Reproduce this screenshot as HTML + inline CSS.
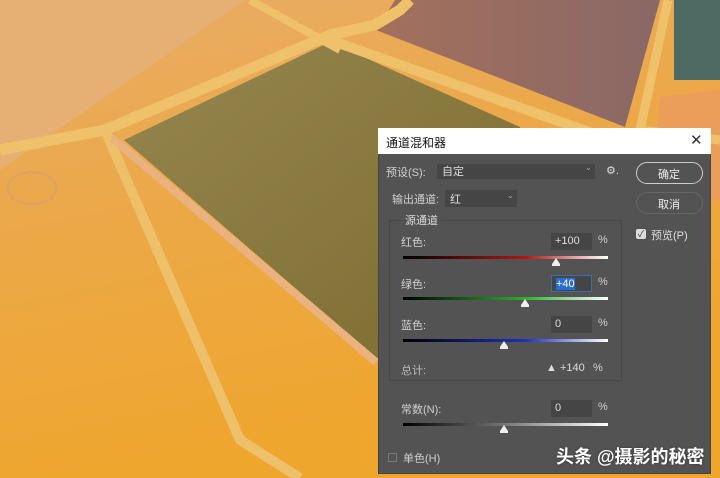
<!DOCTYPE html>
<html><head><meta charset="utf-8"><style>
*{margin:0;padding:0;box-sizing:border-box}
body{width:720px;height:478px;overflow:hidden;position:relative;font-family:"Liberation Sans","Noto Sans CJK SC",sans-serif;background:#eba83e}
.a{position:absolute}
.t{position:absolute;color:#d0d0d0;font-size:11px;white-space:nowrap}
.inp{position:absolute;background:#454545;width:41px;height:17px;color:#ddd;font-size:11px;padding:2px 4px;line-height:13px}
.sl{position:absolute;left:403px;width:205px;height:3px}
.th{position:absolute;width:0;height:0;border-left:4px solid transparent;border-right:4px solid transparent;border-bottom:6px solid #eee}
.th:after{content:"";position:absolute;left:-4px;top:6px;width:8px;height:2px;background:#eee}
</style></head><body>
<svg class="a" style="left:0;top:0" width="720" height="478">
<defs><linearGradient id="bg" x1="0" y1="0" x2="0.3" y2="1"><stop offset="0" stop-color="#e8ac66"/><stop offset="0.5" stop-color="#eca845"/><stop offset="1" stop-color="#efa62c"/></linearGradient>
<linearGradient id="ol" x1="0" y1="0" x2="1" y2="1"><stop offset="0" stop-color="#958650"/><stop offset="1" stop-color="#7c6c2e"/></linearGradient>
<linearGradient id="br" x1="0" y1="0" x2="1" y2="0"><stop offset="0" stop-color="#a3705c"/><stop offset="1" stop-color="#8a6866"/></linearGradient></defs>
<rect width="720" height="478" fill="url(#bg)"/>
<polygon points="0,0 245,0 0,170" fill="#e6b075"/>
<polygon points="395,0 660,0 625,127 376,30" fill="url(#br)"/>
<polygon points="674,0 720,0 720,80 674,80" fill="#4f6a62"/>
<polygon points="660,97 720,90 720,200 650,200" fill="#eb9e5a"/>
<polygon points="124,140 330,42 520,127 520,360 376,358" fill="url(#ol)"/>
<polyline points="0,150 105,130 330,35 375,25 400,10 410,0" fill="none" stroke="#efc16a" stroke-width="11"/>
<polyline points="105,130 240,440 300,478" fill="none" stroke="#eec06a" stroke-width="10"/>
<polyline points="112,138 376,362" fill="none" stroke="#e9b27e" stroke-width="8"/>
<polyline points="330,40 640,150" fill="none" stroke="#efc16a" stroke-width="10"/>
<polyline points="668,0 640,130 720,140" fill="none" stroke="#efc16a" stroke-width="9"/>
<polyline points="250,0 340,50" fill="none" stroke="#efc16a" stroke-width="8"/>
<ellipse cx="32" cy="188" rx="24" ry="16" fill="none" stroke="#dca06a" stroke-width="2"/>
</svg>
<div class="a" style="left:378px;top:128px;width:333px;height:346px;background:#535353;border:1px solid #444"></div>
<div class="a" style="left:378px;top:128px;width:333px;height:26px;background:#fff"></div>
<div class="a" style="left:386px;top:134px;font-size:12px;color:#111">通道混和器</div>
<div class="a" style="left:690px;top:131px;font-size:15px;color:#333">✕</div>
<div class="t" style="left:386px;top:164px">预设(S):</div>
<div class="a" style="left:437px;top:164px;width:158px;height:15px;background:#454545"></div>
<div class="t" style="left:442px;top:163px;color:#ddd">自定</div>
<div class="t" style="left:585px;top:163px;font-size:8px;color:#aaa">⌄</div>
<div class="t" style="left:606px;top:164px;color:#ddd">⚙.</div>
<div class="a" style="left:636px;top:162px;width:67px;height:22px;border:1px solid #ccc;border-radius:11px"></div>
<div class="t" style="left:658px;top:166px;color:#eee">确定</div>
<div class="a" style="left:636px;top:192px;width:67px;height:22px;border:1px solid #666;border-radius:11px"></div>
<div class="t" style="left:658px;top:196px;color:#eee">取消</div>
<div class="t" style="left:392px;top:191px">输出通道:</div>
<div class="a" style="left:445px;top:190px;width:72px;height:17px;background:#454545"></div>
<div class="t" style="left:450px;top:191px;color:#ddd">红</div>
<div class="t" style="left:507px;top:191px;font-size:8px;color:#aaa">⌄</div>
<div class="a" style="left:389px;top:220px;width:233px;height:161px;border:1px solid #484848"></div>
<div class="t" style="left:402px;top:212px;background:#535353;padding:0 3px;color:#ddd">源通道</div>
<div class="a" style="left:636px;top:229px;width:10px;height:10px;background:#ddd;border-radius:2px;color:#333;font-size:9px;line-height:10px;text-align:center">✓</div>
<div class="t" style="left:651px;top:227px;color:#ddd">预览(P)</div>
<div class="t" style="left:401px;top:234px">红色:</div>
<div class="inp" style="left:551px;top:233px">+100</div>
<div class="t" style="left:598px;top:234px">%</div>
<div class="sl" style="top:256px;background:linear-gradient(90deg,#000,#b01818 60%,#fff)"></div>
<div class="th" style="left:552px;top:258px"></div>
<div class="t" style="left:401px;top:276px">绿色:</div>
<div class="inp" style="left:551px;top:275px;border:1px solid #3a6fa8"><span style="background:#2a6cd0;color:#fff">+40</span></div>
<div class="t" style="left:598px;top:276px">%</div>
<div class="sl" style="top:297px;background:linear-gradient(90deg,#000,#30b030 60%,#fff)"></div>
<div class="th" style="left:521px;top:299px"></div>
<div class="t" style="left:401px;top:317px">蓝色:</div>
<div class="inp" style="left:551px;top:316px">0</div>
<div class="t" style="left:598px;top:317px">%</div>
<div class="sl" style="top:339px;background:linear-gradient(90deg,#000,#2030c0 60%,#fff)"></div>
<div class="th" style="left:500px;top:341px"></div>
<div class="t" style="left:401px;top:362px;color:#bbb">总计:</div>
<div class="t" style="left:546px;top:362px;color:#ddd">▲ +140</div>
<div class="t" style="left:593px;top:362px">%</div>
<div class="t" style="left:401px;top:401px">常数(N):</div>
<div class="inp" style="left:551px;top:400px">0</div>
<div class="t" style="left:598px;top:401px">%</div>
<div class="sl" style="top:423px;background:linear-gradient(90deg,#000,#777 50%,#fff)"></div>
<div class="th" style="left:500px;top:425px"></div>
<div class="a" style="left:388px;top:453px;width:9px;height:9px;border:1px solid #777"></div>
<div class="t" style="left:403px;top:450px">单色(H)</div>
<div class="a" style="left:556px;top:443px;font-size:18px;font-weight:bold;color:#fff;white-space:nowrap;text-shadow:0 0 2px #333">头条 @摄影的秘密</div>
</body></html>
